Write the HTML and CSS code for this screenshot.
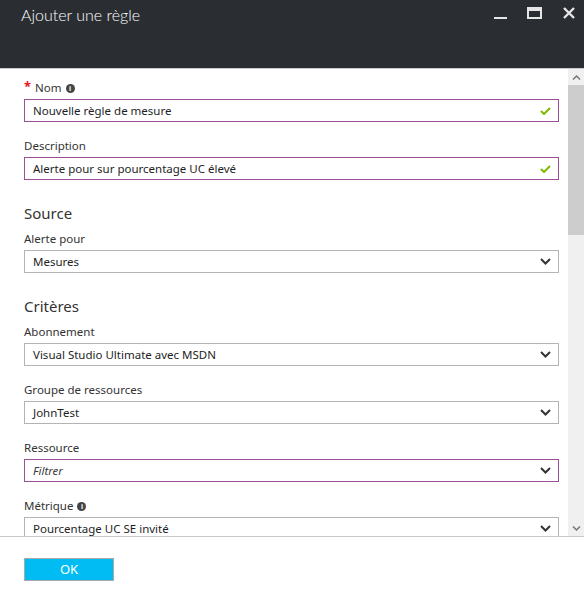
FILE: index.html
```html
<!DOCTYPE html>
<html lang="fr">
<head>
<meta charset="utf-8">
<title>Ajouter une règle</title>
<link rel="stylesheet" href="styles.css">
</head>
<body>
<div class="blade">
  <header class="header">
    <h1 class="title">Ajouter une règle</h1>
    <div class="controls">
      <span class="ctl ctl-min"></span>
      <span class="ctl ctl-max"></span>
      <svg class="ctl ctl-close" width="12" height="12" viewBox="0 0 12 12"><path d="M1 1 L11 11 M11 1 L1 11" stroke="#e6e6e6" stroke-width="2.4" fill="none"/></svg>
    </div>
  </header>
  <div class="main">
    <div class="content">
      <div class="field">
        <div class="label"><span class="req">*</span> Nom <span class="info">i</span></div>
        <div class="box box-valid"><span class="val">Nouvelle règle de mesure</span>
          <svg class="check" width="11" height="8" viewBox="0 0 11 8"><path d="M1 4 L4 7 L10 1" stroke="#7fba00" stroke-width="2" fill="none"/></svg></div>
      </div>
      <div class="field">
        <div class="label">Description</div>
        <div class="box box-valid"><span class="val">Alerte pour sur pourcentage UC élevé</span>
          <svg class="check" width="11" height="8" viewBox="0 0 11 8"><path d="M1 4 L4 7 L10 1" stroke="#7fba00" stroke-width="2" fill="none"/></svg></div>
      </div>
      <h2 class="section">Source</h2>
      <div class="field">
        <div class="label">Alerte pour</div>
        <div class="box"><span class="val">Mesures</span>
          <svg class="chev" width="11" height="7" viewBox="0 0 11 7"><path d="M1 1 L5.5 5.5 L10 1" stroke="#333" stroke-width="2" fill="none"/></svg></div>
      </div>
      <h2 class="section">Critères</h2>
      <div class="field">
        <div class="label">Abonnement</div>
        <div class="box"><span class="val">Visual Studio Ultimate avec MSDN</span>
          <svg class="chev" width="11" height="7" viewBox="0 0 11 7"><path d="M1 1 L5.5 5.5 L10 1" stroke="#333" stroke-width="2" fill="none"/></svg></div>
      </div>
      <div class="field">
        <div class="label">Groupe de ressources</div>
        <div class="box"><span class="val">JohnTest</span>
          <svg class="chev" width="11" height="7" viewBox="0 0 11 7"><path d="M1 1 L5.5 5.5 L10 1" stroke="#333" stroke-width="2" fill="none"/></svg></div>
      </div>
      <div class="field">
        <div class="label">Ressource</div>
        <div class="box box-active"><span class="val placeholder">Filtrer</span>
          <svg class="chev" width="11" height="7" viewBox="0 0 11 7"><path d="M1 1 L5.5 5.5 L10 1" stroke="#333" stroke-width="2" fill="none"/></svg></div>
      </div>
      <div class="field">
        <div class="label">Métrique <span class="info">i</span></div>
        <div class="box"><span class="val">Pourcentage UC SE invité</span>
          <svg class="chev" width="11" height="7" viewBox="0 0 11 7"><path d="M1 1 L5.5 5.5 L10 1" stroke="#333" stroke-width="2" fill="none"/></svg></div>
      </div>
    </div>
    <div class="scrollbar">
      <div class="sb-btn"><svg width="9" height="5" viewBox="0 0 9 5"><path d="M1 4.5 L4.5 1 L8 4.5" stroke="#777" stroke-width="1.5" fill="none"/></svg></div>
      <div class="sb-thumb"></div>
      <div class="sb-track"></div>
      <div class="sb-btn"><svg width="9" height="5" viewBox="0 0 9 5"><path d="M1 0.5 L4.5 4 L8 0.5" stroke="#777" stroke-width="1.5" fill="none"/></svg></div>
    </div>
  </div>
  <footer class="footer">
    <button class="ok">OK</button>
  </footer>
</div>
</body>
</html>
```
FILE: styles.css
```css
* { box-sizing: border-box; }
html, body { margin: 0; padding: 0; }
body {
  width: 584px;
  height: 599px;
  overflow: hidden;
  background: #fff;
  font-family: "Segoe UI", "Noto Sans", "Open Sans", sans-serif;
  color: #333;
}
.blade {
  display: flex;
  flex-direction: column;
  height: 599px;
}
.header {
  height: 69px;
  flex: none;
  background: #2a2e33;
  border-bottom: 1px solid #c8c8c8;
  display: flex;
  justify-content: space-between;
  align-items: flex-start;
}
.title {
  margin: 0;
  padding: 4px 0 0 21px;
  font-family: "Lato", "Noto Sans", sans-serif;
  font-size: 16px;
  line-height: 22px;
  font-weight: 300;
  color: #fff;
}
.controls {
  display: flex;
  align-items: flex-start;
  padding: 7px 9px 0 0;
}
.ctl { display: block; }
.ctl-min {
  width: 13px;
  height: 2px;
  background: #e6e6e6;
  margin: 10px 0 0 0;
}
.ctl-max {
  width: 15px;
  height: 12px;
  border: 2px solid #e6e6e6;
  border-top-width: 4px;
  margin-left: 20px;
}
.ctl-close {
  margin-left: 21px;
}
.main {
  display: flex;
  height: 467px;
  flex: none;
  overflow: hidden;
}
.content {
  flex: 1;
  display: flex;
  flex-direction: column;
  padding: 10px 9px 0 24px;
  overflow: hidden;
}
.field { margin-bottom: 15px; flex: none; }
.label {
  font-size: 11.5px;
  line-height: 18px;
  height: 18px;
  margin-bottom: 2px;
  color: #333;
  display: flex;
  align-items: center;
}
.req {
  color: #e81123;
  font-size: 13px;
  margin-right: 4px;
  font-weight: bold;
  position: relative;
  top: -2px;
}
.info {
  display: inline-flex;
  width: 9px;
  height: 9px;
  border-radius: 50%;
  background: #444;
  color: #fff;
  font-size: 7px;
  font-weight: bold;
  line-height: 9px;
  justify-content: center;
  margin-left: 4px;
}
.box {
  height: 23px;
  border: 1px solid #b3b3b3;
  display: flex;
  align-items: center;
  justify-content: space-between;
  padding: 0 7px 0 8px;
  background: #fff;
}
.box-valid, .box-active { border-color: #9a4f97; }
.val {
  font-size: 11.5px;
  color: #1e1e1e;
}
.placeholder { font-style: italic; color: #3c3c3c; }
.section {
  flex: none;
  margin: 8px 0 7px 0;
  font-size: 15px;
  line-height: 20px;
  font-weight: 400;
  color: #333;
}
.scrollbar {
  width: 16px;
  flex: none;
  background: #f0f0f0;
  display: flex;
  flex-direction: column;
}
.sb-btn {
  height: 16px;
  display: flex;
  align-items: center;
  justify-content: center;
  flex: none;
}
.sb-thumb {
  height: 150px;
  background: #cdcdcd;
  flex: none;
}
.sb-track { flex: 1; }
.footer {
  flex: 1;
  border-top: 1px solid #c8c8c8;
  padding: 20px 24px 0;
}
.ok {
  width: 90px;
  height: 23px;
  background: #00bcf2;
  border: 1px solid #a9a9a9;
  color: #fff;
  font-family: inherit;
  font-size: 13px;
  padding: 0;
}
```
